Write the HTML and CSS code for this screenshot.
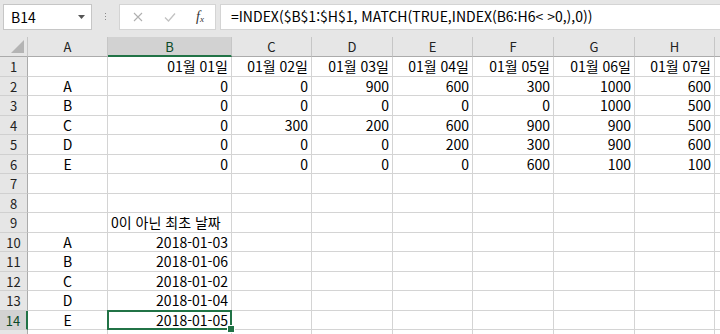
FILE: index.html
```html
<!DOCTYPE html>
<html lang="ko">
<head>
	<meta charset="UTF-8">
	<title>Sheet</title>
	<link rel="stylesheet" href="styles.css">
</head>
<body>
	<div class="toolbar">
		<div class="nameBox">
			<span>B14</span>
			<svg class="caret" width="7" height="4" viewBox="0 0 7 4"><path d="M0 0H7L3.5 4Z" fill="#555"/></svg>
		</div>
		<div class="grip"><i></i><i></i><i></i></div>
		<div class="fxBox">
			<svg class="cancel" width="10" height="10" viewBox="0 0 10 10"><path d="M1 1L9 9M9 1L1 9" stroke="#b0b0b0" stroke-width="1.1"/></svg>
			<svg class="enter" width="12" height="10" viewBox="0 0 12 10"><path d="M1 5.5L4.5 9L11 1.5" stroke="#c2c2c2" stroke-width="1.3" fill="none"/></svg>
			<span class="fx">f<sub>x</sub></span>
		</div>
		<div class="formula">=INDEX($B$1:$H$1, MATCH(TRUE,INDEX(B6:H6&lt; &gt;0,),0))</div>
	</div>

	<div class="sheet">
		<div class="corner"><span class="tri"></span></div>
		<div class="colHead">A</div>
		<div class="colHead sel">B</div>
		<div class="colHead">C</div>
		<div class="colHead">D</div>
		<div class="colHead">E</div>
		<div class="colHead">F</div>
		<div class="colHead">G</div>
		<div class="colHead">H</div>
		<div class="colHead"></div>

		<div class="rowHead">1</div>
		<div class="c"></div><div class="c r">01월 01일</div><div class="c r">01월 02일</div><div class="c r">01월 03일</div><div class="c r">01월 04일</div><div class="c r">01월 05일</div><div class="c r">01월 06일</div><div class="c r">01월 07일</div><div class="c"></div>

		<div class="rowHead">2</div>
		<div class="c m">A</div><div class="c r">0</div><div class="c r">0</div><div class="c r">900</div><div class="c r">600</div><div class="c r">300</div><div class="c r">1000</div><div class="c r">600</div><div class="c"></div>

		<div class="rowHead">3</div>
		<div class="c m">B</div><div class="c r">0</div><div class="c r">0</div><div class="c r">0</div><div class="c r">0</div><div class="c r">0</div><div class="c r">1000</div><div class="c r">500</div><div class="c"></div>

		<div class="rowHead">4</div>
		<div class="c m">C</div><div class="c r">0</div><div class="c r">300</div><div class="c r">200</div><div class="c r">600</div><div class="c r">900</div><div class="c r">900</div><div class="c r">500</div><div class="c"></div>

		<div class="rowHead">5</div>
		<div class="c m">D</div><div class="c r">0</div><div class="c r">0</div><div class="c r">0</div><div class="c r">200</div><div class="c r">300</div><div class="c r">900</div><div class="c r">600</div><div class="c"></div>

		<div class="rowHead">6</div>
		<div class="c m">E</div><div class="c r">0</div><div class="c r">0</div><div class="c r">0</div><div class="c r">0</div><div class="c r">600</div><div class="c r">100</div><div class="c r">100</div><div class="c"></div>

		<div class="rowHead">7</div>
		<div class="c"></div><div class="c"></div><div class="c"></div><div class="c"></div><div class="c"></div><div class="c"></div><div class="c"></div><div class="c"></div><div class="c"></div>

		<div class="rowHead">8</div>
		<div class="c"></div><div class="c"></div><div class="c"></div><div class="c"></div><div class="c"></div><div class="c"></div><div class="c"></div><div class="c"></div><div class="c"></div>

		<div class="rowHead">9</div>
		<div class="c"></div><div class="c l">0이 아닌 최초 날짜</div><div class="c"></div><div class="c"></div><div class="c"></div><div class="c"></div><div class="c"></div><div class="c"></div><div class="c"></div>

		<div class="rowHead">10</div>
		<div class="c m">A</div><div class="c r">2018-01-03</div><div class="c"></div><div class="c"></div><div class="c"></div><div class="c"></div><div class="c"></div><div class="c"></div><div class="c"></div>

		<div class="rowHead">11</div>
		<div class="c m">B</div><div class="c r">2018-01-06</div><div class="c"></div><div class="c"></div><div class="c"></div><div class="c"></div><div class="c"></div><div class="c"></div><div class="c"></div>

		<div class="rowHead">12</div>
		<div class="c m">C</div><div class="c r">2018-01-02</div><div class="c"></div><div class="c"></div><div class="c"></div><div class="c"></div><div class="c"></div><div class="c"></div><div class="c"></div>

		<div class="rowHead">13</div>
		<div class="c m">D</div><div class="c r">2018-01-04</div><div class="c"></div><div class="c"></div><div class="c"></div><div class="c"></div><div class="c"></div><div class="c"></div><div class="c"></div>

		<div class="rowHead sel">14</div>
		<div class="c m">E</div><div class="c r active">2018-01-05</div><div class="c"></div><div class="c"></div><div class="c"></div><div class="c"></div><div class="c"></div><div class="c"></div><div class="c"></div>

		<div class="rowHead"></div>
		<div class="c"></div><div class="c"></div><div class="c"></div><div class="c"></div><div class="c"></div><div class="c"></div><div class="c"></div><div class="c"></div><div class="c"></div>
	</div>
</body>
</html>
```

FILE: styles.css
```css
* {
	margin: 0;
	padding: 0;
	box-sizing: border-box;
}
html, body {
	width: 720px;
	height: 334px;
	overflow: hidden;
	background: #fff;
	font-family: "Noto Sans CJK KR", "Noto Sans", sans-serif;
	color: #000;
}

/* 상단 수식 입력줄 */
.toolbar {
	display: flex;
	align-items: center;
	height: 37px;
	padding: 0 0 4px 3px;
	background: #e6e6e6;
}
.nameBox {
	display: flex;
	align-items: center;
	justify-content: space-between;
	width: 89px;
	height: 26px;
	padding: 0 6px 0 7px;
	background: #fff;
	border: 1px solid #c6c6c6;
	font-size: 14px;
}
.grip {
	display: flex;
	flex-direction: column;
	gap: 2px;
	width: 27px;
	align-items: center;
}
.grip i {
	display: block;
	width: 1px;
	height: 1px;
	background: #8a8a8a;
}
.fxBox {
	display: flex;
	align-items: center;
	width: 97px;
	height: 26px;
	padding: 0 0 0 13px;
	background: #fff;
	border: 1px solid #d4d4d4;
}
.fxBox .cancel {
	margin-right: 21px;
}
.fxBox .enter {
	margin-right: 20px;
}
.fx {
	font-family: "Liberation Serif", serif;
	font-style: italic;
	font-size: 14px;
	color: #333;
}
.fx sub {
	font-size: 9px;
	vertical-align: -1px;
}
.formula {
	flex: 1;
	height: 26px;
	margin-left: 4px;
	padding: 0 0 0 10px;
	background: #fff;
	border: 1px solid #d4d4d4;
	border-right: none;
	font-size: 14px;
	line-height: 23px;
	white-space: nowrap;
}

/* 시트 격자 */
.sheet {
	display: grid;
	grid-template-columns: 28px 80px 124px 80px 81px 80px 81px 81px 80px 1fr;
	grid-template-rows: 20px 20px 19px 20px 19px 20px 19px 20px 19px 20px 19px 20px 19px 20px 19px 20px;
	font-size: 14px;
}
.corner {
	position: relative;
	background: #e6e6e6;
	border-right: 1px solid #c6c6c6;
	border-bottom: 1px solid #ababab;
}
.corner .tri {
	position: absolute;
	right: 3px;
	bottom: 3px;
	width: 0;
	height: 0;
	border-left: 13px solid transparent;
	border-bottom: 13px solid #b4b4b4;
}
.colHead {
	background: #e6e6e6;
	border-right: 1px solid #c6c6c6;
	border-bottom: 1px solid #ababab;
	text-align: center;
	font-size: 13px;
	line-height: 19px;
	color: #222;
}
.colHead.sel {
	background: #d2d2d2;
	border-bottom: 2px solid #217346;
	color: #0b4a27;
}
.rowHead {
	background: #e6e6e6;
	border-right: 1px solid #ababab;
	border-bottom: 1px solid #d0d0d0;
	text-align: center;
	font-size: 13px;
	line-height: 19px;
	color: #222;
}
.rowHead.sel {
	background: #d2d2d2;
	border-right: 2px solid #217346;
	color: #0b4a27;
}
.c {
	border-right: 1px solid #d4d4d4;
	border-bottom: 1px solid #d4d4d4;
	line-height: 18px;
	padding: 0 3px;
	white-space: nowrap;
	overflow: hidden;
}
.r {
	text-align: right;
}
.m {
	text-align: center;
}
.l {
	text-align: left;
}
.active {
	position: relative;
	overflow: visible;
}
.active::after {
	content: '';
	position: absolute;
	left: -1px;
	top: -1px;
	right: -1px;
	bottom: -1px;
	border: 2px solid #217346;
}
.active::before {
	content: '';
	position: absolute;
	right: -4px;
	bottom: -4px;
	width: 6px;
	height: 6px;
	background: #217346;
	border: 1px solid #fff;
	z-index: 2;
}
```
